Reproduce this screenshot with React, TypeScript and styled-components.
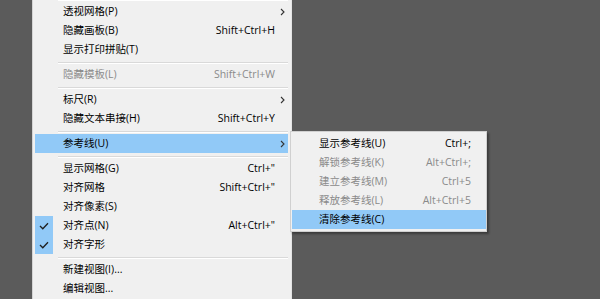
import React from "react";
import styled, { createGlobalStyle, css } from "styled-components";

const Global = createGlobalStyle`
  html, body { margin: 0; padding: 0; }
  body {
    background: #5b5b5b;
    width: 600px;
    height: 299px;
    overflow: hidden;
    font-family: "Open Sans", "Noto Sans CJK SC", sans-serif;
    font-size: 10.5px;
    color: #000;
  }
`;

const Page = styled.div`
  display: flex;
  padding-left: 32px;
  height: 299px;
`;

const Menu = styled.div`
  position: relative;
  width: 260px;
  box-sizing: border-box;
  margin-top: -4px;
  padding: 0 3px 0 2px;
  background: #f0f0f0;
  border-left: 1px solid #d4d4d4;
  border-right: 1px solid #e4e4e4;
  display: flex;
  flex-direction: column;
`;

const Separator = styled.div`
  height: 6px;
  display: flex;
  align-items: center;
  padding-left: 23px;
  &::after {
    content: "";
    flex: 1;
    height: 1px;
    background: #d9d9d9;
    box-shadow: 0 1px 0 #ffffff;
  }
`;

const Row = styled.div<{ $active?: boolean; $disabled?: boolean; $sub?: boolean }>`
  position: relative;
  height: 19px;
  display: grid;
  grid-template-columns: ${(p) => (p.$sub ? "27px 1fr auto 15px" : "18px 1fr auto 13px")};
  align-items: center;
  white-space: nowrap;
  color: ${(p) => (p.$disabled ? "#8a8a8a" : "#000")};
  ${(p) =>
    p.$active &&
    css`
      background: #91c9f7;
    `}
`;

const Check = styled.div<{ $on?: boolean }>`
  height: 19px;
  display: flex;
  align-items: center;
  justify-content: center;
  background: ${(p) => (p.$on ? "#91c9f7" : "transparent")};
`;

const Label = styled.span<{ $sub?: boolean }>`
  padding-left: ${(p) => (p.$sub ? "0" : "10px")};
  line-height: 19px;
`;

const Shortcut = styled.span`
  text-align: right;
  line-height: 19px;
`;

const Arrow = styled.div`
  display: flex;
  align-items: center;
  padding-left: 5px;
`;

const SubMenu = styled.div`
  position: absolute;
  left: 255px;
  top: -3px;
  width: 197px;
  box-sizing: border-box;
  padding: 2px 0 2px 1px;
  background: #f0f0f0;
  border: 1px solid #d0d0d0;
  box-shadow: 2px 2px 2px rgba(0, 0, 0, 0.35);
  display: flex;
  flex-direction: column;
  z-index: 2;
`;

const Chevron = () => (
  <svg width="5" height="8" viewBox="0 0 5 8">
    <path d="M1 1 L4 4 L1 7" fill="none" stroke="#333" strokeWidth="1.1" />
  </svg>
);

const Tick = () => (
  <svg width="10" height="8" viewBox="0 0 10 8">
    <path d="M1 4 L3.8 6.8 L9 1.2" fill="none" stroke="#1f1f1f" strokeWidth="1.3" />
  </svg>
);

type Item =
  | { sep: true }
  | {
      label: string;
      shortcut?: string;
      arrow?: boolean;
      disabled?: boolean;
      checked?: boolean;
      active?: boolean;
      sub?: boolean;
    };

const subItems = [
  { label: "显示参考线(U)", shortcut: "Ctrl+;" },
  { label: "解锁参考线(K)", shortcut: "Alt+Ctrl+;", disabled: true },
  { label: "建立参考线(M)", shortcut: "Ctrl+5", disabled: true },
  { label: "释放参考线(L)", shortcut: "Alt+Ctrl+5", disabled: true },
  { label: "清除参考线(C)", active: true },
];

const items: Item[] = [
  { sep: true },
  { label: "透视网格(P)", arrow: true },
  { label: "隐藏画板(B)", shortcut: "Shift+Ctrl+H" },
  { label: "显示打印拼贴(T)" },
  { sep: true },
  { label: "隐藏模板(L)", shortcut: "Shift+Ctrl+W", disabled: true },
  { sep: true },
  { label: "标尺(R)", arrow: true },
  { label: "隐藏文本串接(H)", shortcut: "Shift+Ctrl+Y" },
  { sep: true },
  { label: "参考线(U)", arrow: true, active: true, sub: true },
  { sep: true },
  { label: "显示网格(G)", shortcut: "Ctrl+\"" },
  { label: "对齐网格", shortcut: "Shift+Ctrl+\"" },
  { label: "对齐像素(S)" },
  { label: "对齐点(N)", shortcut: "Alt+Ctrl+\"", checked: true },
  { label: "对齐字形", checked: true },
  { sep: true },
  { label: "新建视图(I)..." },
  { label: "编辑视图..." },
];

export default function App() {
  return (
    <>
      <Global />
      <Page>
        <Menu>
          {items.map((it, i) =>
            "sep" in it ? (
              <Separator key={i} />
            ) : (
              <Row key={i} $active={it.active} $disabled={it.disabled}>
                <Check $on={it.checked}>{it.checked && <Tick />}</Check>
                <Label>{it.label}</Label>
                <Shortcut>{it.shortcut ?? ""}</Shortcut>
                <Arrow>{it.arrow && <Chevron />}</Arrow>
                {it.sub && (
                  <SubMenu>
                    {subItems.map((s, j) => (
                      <Row key={j} $sub $active={s.active} $disabled={s.disabled}>
                        <Check />
                        <Label $sub>{s.label}</Label>
                        <Shortcut>{s.shortcut ?? ""}</Shortcut>
                        <Arrow />
                      </Row>
                    ))}
                  </SubMenu>
                )}
              </Row>
            )
          )}
        </Menu>
      </Page>
    </>
  );
}
